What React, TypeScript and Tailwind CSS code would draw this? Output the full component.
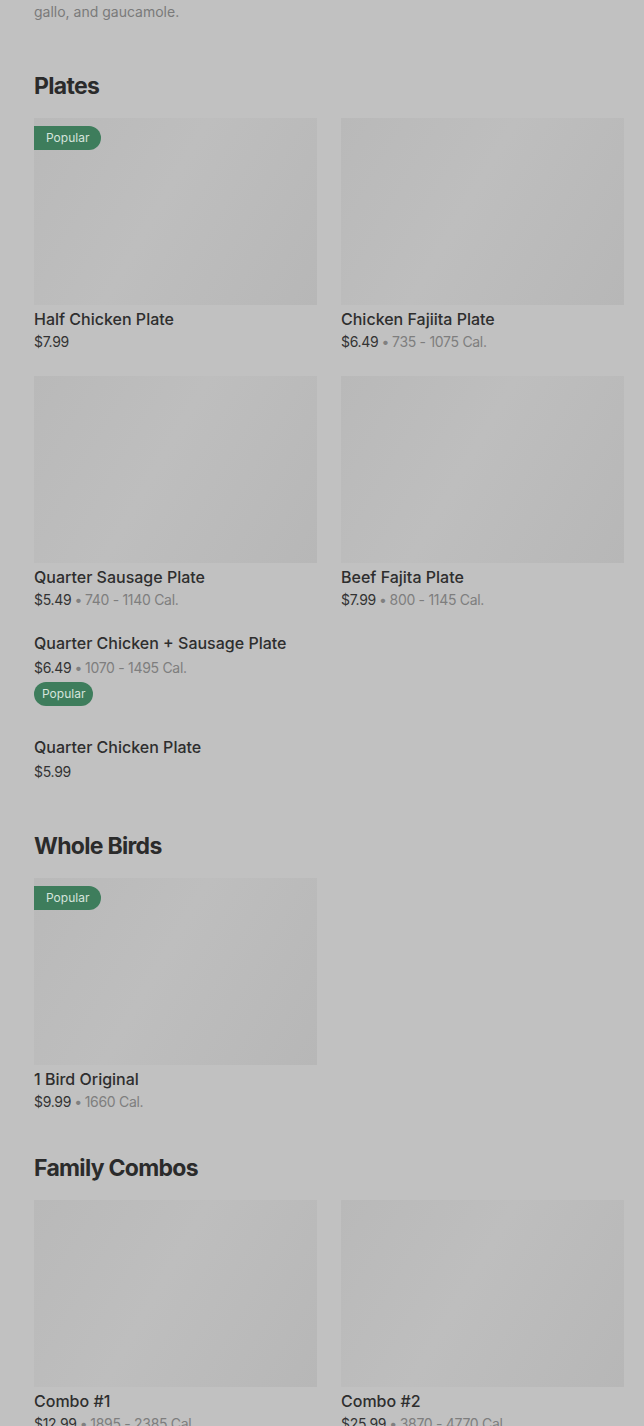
import React from "react";

type Item = { name: string; price: string; cal?: string; popular?: boolean };

function Img({ popular }: { popular?: boolean }) {
  return (
    <div className="relative h-[187px] w-full bg-[linear-gradient(120deg,#b9b9b9_0%,#bebebe_45%,#b7b7b7_100%)]">
      {popular && (
        <div className="absolute left-0 top-[8px] flex h-[24px] items-center rounded-r-full bg-[#3e7d5c] pl-[12px] pr-[12px] text-[12px] text-[#d6e4dc]">
          Popular
        </div>
      )}
    </div>
  );
}

function Meta({ item }: { item: Item }) {
  return (
    <div className="flex items-center text-[14px] leading-[20px] tracking-[-0.3px]">
      <span className="text-[#333333]">{item.price}</span>
      {item.cal && (
        <>
          <span className="mx-[3px] text-[#808080]">•</span>
          <span className="text-[#7e7e7e]">{item.cal}</span>
        </>
      )}
    </div>
  );
}

function Card({ item }: { item: Item }) {
  return (
    <div className="flex flex-col">
      <Img popular={item.popular} />
      <div className="mt-[4px] text-[16px] font-medium leading-[20px] text-[#2e2e2e]">{item.name}</div>
      <div className="mt-[3px]">
        <Meta item={item} />
      </div>
    </div>
  );
}

function Heading({ children }: { children: React.ReactNode }) {
  return <h2 className="text-[23px] font-bold leading-[32px] tracking-[-0.7px] text-[#2b2b2b]">{children}</h2>;
}

export default function App() {
  return (
    <div className="min-h-[1426px] w-full bg-[#c1c1c1] pl-[34px] pr-[20px] font-['Inter',sans-serif]">
      <div className="pt-[2px] text-[14px] leading-[20px] text-[#7a7a7a]">gallo, and gaucamole.</div>

      <section className="mt-[48px]">
        <Heading>Plates</Heading>
        <div className="mt-[16px] grid grid-cols-2 gap-x-[24px] gap-y-[24px]">
          <Card item={{ name: "Half Chicken Plate", price: "$7.99", popular: true }} />
          <Card item={{ name: "Chicken Fajiita Plate", price: "$6.49", cal: "735 - 1075 Cal." }} />
          <Card item={{ name: "Quarter Sausage Plate", price: "$5.49", cal: "740 - 1140 Cal." }} />
          <Card item={{ name: "Beef Fajita Plate", price: "$7.99", cal: "800 - 1145 Cal." }} />
        </div>
        <div className="mt-[23px] flex flex-col">
          <div className="text-[16px] font-medium leading-[20px] text-[#2e2e2e]">Quarter Chicken + Sausage Plate</div>
          <div className="mt-[5px]">
            <Meta item={{ name: "", price: "$6.49", cal: "1070 - 1495 Cal." }} />
          </div>
          <div className="mt-[4px] flex h-[24px] w-fit items-center rounded-full bg-[#3e7d5c] px-[8px] text-[12px] text-[#d6e4dc]">
            Popular
          </div>
        </div>
        <div className="mt-[31px] flex flex-col">
          <div className="text-[16px] font-medium leading-[20px] text-[#2e2e2e]">Quarter Chicken Plate</div>
          <div className="mt-[5px]">
            <Meta item={{ name: "", price: "$5.99" }} />
          </div>
        </div>
      </section>

      <section className="mt-[48px]">
        <Heading>Whole Birds</Heading>
        <div className="mt-[16px] grid grid-cols-2 gap-x-[24px]">
          <Card item={{ name: "1 Bird Original", price: "$9.99", cal: "1660 Cal.", popular: true }} />
        </div>
      </section>

      <section className="mt-[40px]">
        <Heading>Family Combos</Heading>
        <div className="mt-[16px] grid grid-cols-2 gap-x-[24px]">
          <Card item={{ name: "Combo #1", price: "$12.99", cal: "1895 - 2385 Cal." }} />
          <Card item={{ name: "Combo #2", price: "$25.99", cal: "3870 - 4770 Cal." }} />
        </div>
      </section>
    </div>
  );
}
